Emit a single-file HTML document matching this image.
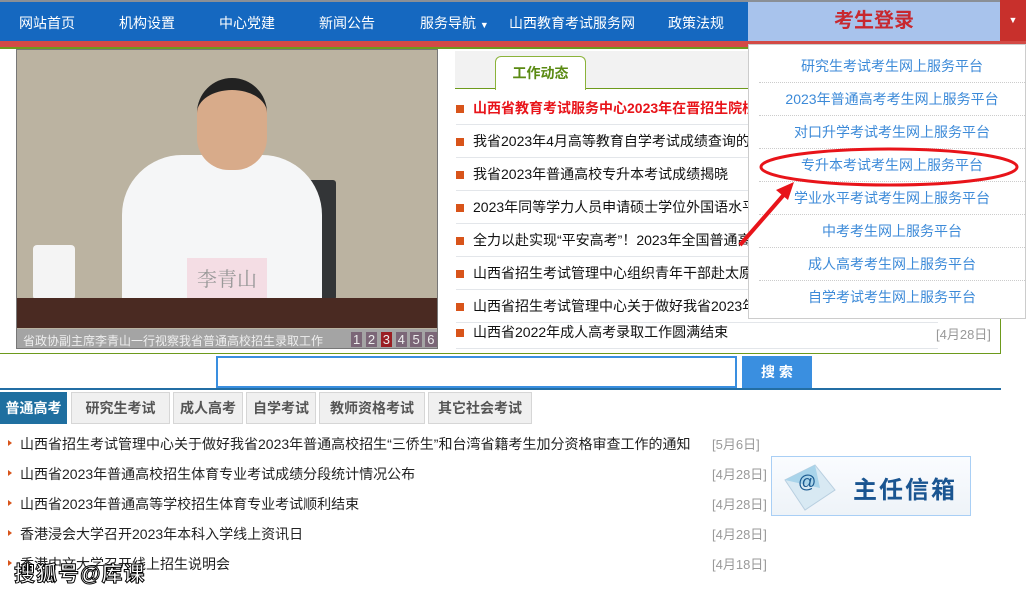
<!DOCTYPE html>
<html><head><meta charset="utf-8"><style>
*{margin:0;padding:0;box-sizing:border-box}
body{width:1026px;height:594px;overflow:hidden;background:#fff;font-family:"Liberation Sans","Noto Sans CJK SC",sans-serif;position:relative}
.a{position:absolute}
.nav{left:0;top:2px;width:1026px;height:39px;background:#1568c0}
.nav span{position:absolute;top:11px;color:#fff;font-size:14px}
.news div{position:absolute;left:456px;font-size:14px;color:#111;white-space:nowrap;width:482px;overflow:hidden;height:33px;line-height:33px;border-bottom:1px solid #e3e6ea;padding-left:17px}
.news div:before{content:"";position:absolute;left:0;top:13px;width:8px;height:8px;background:#d8541a}
.dd div{height:33px;line-height:32px;text-align:center;color:#3c8ad8;font-size:14px;border-bottom:1px dotted #ccc}
.tabs span{position:absolute;top:392px;height:32px;line-height:31px;font-size:14px;font-weight:bold;color:#555;background:#f0f0f0;border:1px solid #d6d6d6;text-align:center}
.list div{position:absolute;left:8px;width:760px;font-size:14px;color:#222;white-space:nowrap;padding-left:12px}
.list div:before{content:"";position:absolute;left:0;top:6px;border-left:4px solid #d8541a;border-top:3px solid transparent;border-bottom:3px solid transparent}
.list i{position:absolute;left:704px;font-style:normal;color:#999;font-size:13px}
</style></head><body>
<div class="a" style="left:0;top:0;width:1026px;height:2px;background:#8a8f96"></div>
<div class="a nav">
<span style="left:19px">网站首页</span><span style="left:119px">机构设置</span><span style="left:219px">中心党建</span><span style="left:319px">新闻公告</span><span style="left:420px">服务导航 <small style="font-size:9px">▼</small></span><span style="left:509px">山西教育考试服务网</span><span style="left:668px">政策法规</span>
</div>
<div class="a" style="left:0;top:41px;width:1026px;height:6px;background:#d34a46"></div>
<div class="a" style="left:0;top:47px;width:1000px;height:2px;background:#6d9a1c"></div>
<div class="a" style="left:748px;top:2px;width:252px;height:39px;background:#a8c3ec;color:#c8282f;font-size:20px;font-weight:bold;text-align:center;line-height:39px">考生登录</div>
<div class="a" style="left:1000px;top:0;width:26px;height:41px;background:#c8302c;color:#fff;font-size:9px;text-align:center;line-height:41px">▼</div>
<!-- photo -->
<div class="a" style="left:16px;top:49px;width:422px;height:300px;background:#bbb3a1;border:1px solid #777;overflow:hidden">
<div class="a" style="left:285px;top:130px;width:34px;height:120px;background:#333537;border-radius:3px"></div>
<div class="a" style="left:105px;top:105px;width:200px;height:160px;background:#f5f6f7;border-radius:60px 60px 0 0"></div>
<div class="a" style="left:180px;top:28px;width:70px;height:92px;background:#d8ab8a;border-radius:35px 35px 32px 32px;border-top:12px solid #222"></div>
<div class="a" style="left:16px;top:195px;width:42px;height:55px;background:#f4f4f4;border-radius:4px"></div>
<div class="a" style="left:170px;top:208px;width:80px;height:40px;background:#f4dde4;color:#999;font-size:20px;text-align:center;line-height:40px;font-family:'Noto Serif CJK SC',serif">李青山</div>
<div class="a" style="left:0;top:248px;width:422px;height:30px;background:#4a2a22"></div>
<div class="a" style="left:0;top:279px;width:422px;height:20px;background:#a4a4a4"></div>
<div class="a" style="left:6px;top:282px;color:#eee;font-size:12px">省政协副主席李青山一行视察我省普通高校招生录取工作</div>
<div class="a" style="left:334px;top:282px;font-size:13px;color:#eee;letter-spacing:0"><span style="background:#7b6677;padding:0 2px">1</span> <span style="background:#7b6677;padding:0 2px">2</span> <span style="background:#9a1e22;padding:0 2px">3</span> <span style="background:#7b6677;padding:0 2px">4</span> <span style="background:#7b6677;padding:0 2px">5</span> <span style="background:#7b6677;padding:0 2px">6</span></div>
</div>
<!-- news -->
<div class="a" style="left:455px;top:51px;width:545px;height:38px;background:#f2f2f2;border-bottom:1px solid #6d9a1c"></div>
<div class="a" style="left:495px;top:56px;width:91px;height:34px;background:#fff;border:1px solid #8bb33a;border-bottom:none;border-radius:6px 6px 0 0;color:#5a8a12;font-weight:bold;font-size:14px;text-align:center;line-height:33px">工作动态</div>
<div class="news">
<div style="top:92px;color:#e8141a;font-weight:bold">山西省教育考试服务中心2023年在晋招生院校招生咨询会</div>
<div style="top:125px">我省2023年4月高等教育自学考试成绩查询的通知</div>
<div style="top:158px">我省2023年普通高校专升本考试成绩揭晓</div>
<div style="top:191px">2023年同等学力人员申请硕士学位外国语水平考试</div>
<div style="top:224px">全力以赴实现“平安高考”！2023年全国普通高考</div>
<div style="top:257px">山西省招生考试管理中心组织青年干部赴太原</div>
<div style="top:290px">山西省招生考试管理中心关于做好我省2023年</div>
<div style="top:316px">山西省2022年成人高考录取工作圆满结束</div>
</div>
<div class="a" style="left:936px;top:324px;color:#999;font-size:13px">[4月28日]</div>
<div class="a" style="left:1000px;top:49px;width:1px;height:305px;background:#6d9a1c"></div>
<div class="a" style="left:0;top:353px;width:1001px;height:1px;background:#6d9a1c"></div>
<!-- dropdown -->
<div class="a dd" style="left:748px;top:44px;width:278px;height:275px;background:#fff;border:1px solid #ccc;padding-top:5px;padding-left:10px">
<div>研究生考试考生网上服务平台</div><div>2023年普通高考考生网上服务平台</div><div>对口升学考试考生网上服务平台</div><div>专升本考试考生网上服务平台</div><div>学业水平考试考生网上服务平台</div><div>中考考生网上服务平台</div><div>成人高考考生网上服务平台</div><div style="border:none">自学考试考生网上服务平台</div>
</div>
<svg class="a" style="left:730px;top:140px" width="296" height="110"><ellipse cx="159" cy="27" rx="128" ry="18" fill="none" stroke="#e8141a" stroke-width="3"/><line x1="10" y1="105" x2="58" y2="50" stroke="#e8141a" stroke-width="4"/><polygon points="64,42 46,50 58,60" fill="#e8141a"/></svg>
<!-- search -->
<div class="a" style="left:216px;top:356px;width:521px;height:32px;border:2px solid #3a8fe0"></div>
<div class="a" style="left:742px;top:356px;width:70px;height:32px;background:#3a8fe0;color:#fff;font-weight:bold;font-size:14px;text-align:center;line-height:32px">搜 索</div>
<div class="a" style="left:0;top:388px;width:1001px;height:2px;background:#236ea4"></div>
<div class="tabs">
<span style="left:0;width:67px;background:#1f6fa0;color:#fff;border-color:#1f6fa0">普通高考</span>
<span style="left:71px;width:99px">研究生考试</span><span style="left:173px;width:70px">成人高考</span><span style="left:246px;width:70px">自学考试</span><span style="left:319px;width:106px">教师资格考试</span><span style="left:428px;width:104px">其它社会考试</span>
</div>
<div class="list">
<div style="top:434px">山西省招生考试管理中心关于做好我省2023年普通高校招生“三侨生”和台湾省籍考生加分资格审查工作的通知<i style="left:704px">[5月6日]</i></div>
<div style="top:464px">山西省2023年普通高校招生体育专业考试成绩分段统计情况公布<i>[4月28日]</i></div>
<div style="top:494px">山西省2023年普通高等学校招生体育专业考试顺利结束<i>[4月28日]</i></div>
<div style="top:524px">香港浸会大学召开2023年本科入学线上资讯日<i>[4月28日]</i></div>
<div style="top:554px">香港中文大学召开线上招生说明会<i>[4月18日]</i></div>
</div>
<div class="a" style="left:771px;top:456px;width:200px;height:60px;border:1px solid #a9cff5;background:linear-gradient(#fafcff,#eef3f8)"></div>
<svg class="a" style="left:780px;top:460px" width="70" height="55"><polygon points="5,20 35,5 55,30 25,50" fill="#d8e9f3" stroke="#b8cfe0"/><polygon points="5,20 35,5 40,28" fill="#a9d4ea"/><text x="18" y="28" font-size="18" fill="#1a5a90" font-family="Liberation Sans">@</text></svg>
<div class="a" style="left:853px;top:470px;color:#1a5591;font-size:24px;font-weight:bold;letter-spacing:2px">主任信箱</div>
<div class="a" style="left:14px;top:558px;color:#fff;font-size:21px;font-weight:bold;-webkit-text-stroke:1px #000;letter-spacing:1px">搜狐号@库课</div>
</body></html>
